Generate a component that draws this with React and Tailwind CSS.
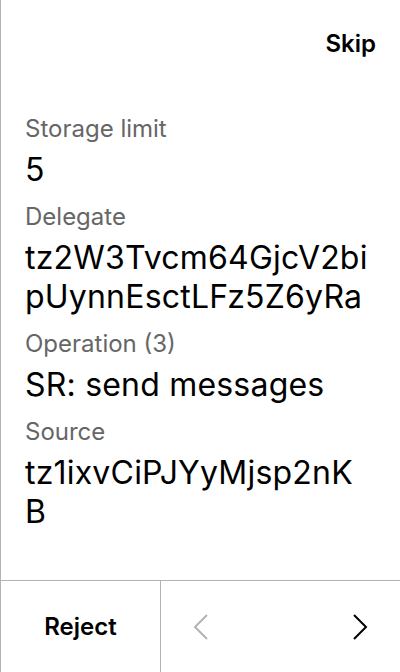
import React from "react";

// values are listed line by line, as the device wraps them
const fields = [
  { label: "Storage limit", lines: ["5"] },
  { label: "Delegate", lines: ["tz2W3Tvcm64GjcV2bi", "pUynnEsctLFz5Z6yRa"] },
  { label: "Operation (3)", lines: ["SR: send messages"] },
  { label: "Source", lines: ["tz1ixvCiPJYyMjsp2nK", "B"] },
];

const Chevron = ({ dir, className }) => (
  <svg
    width="16"
    height="26"
    viewBox="0 0 16 26"
    fill="none"
    stroke="currentColor"
    strokeWidth="2"
    className={className}
  >
    {dir === "left" ? (
      <polyline points="14,1 2,13 14,25" />
    ) : (
      <polyline points="2,1 14,13 2,25" />
    )}
  </svg>
);

const App = () => {
  return (
    <div className="w-[400px] h-[672px] flex flex-col bg-white border-l border-[#b3b3b3] font-['Inter',sans-serif] text-black">
      <div className="h-[88px] flex items-center justify-end px-6">
        <button type="button" className="text-[24px] font-semibold">
          Skip
        </button>
      </div>

      <div className="flex-1 flex flex-col gap-[12px] px-6 pt-[25px]">
        {fields.map((f) => (
          <div key={f.label} className="flex flex-col">
            <div className="text-[24px] leading-[32px] text-[#666666]">
              {f.label}
            </div>
            <div className="mt-[5px] text-[32px] leading-[39px] tracking-[0.2px]">
              {f.lines.map((line) => (
                <div key={line}>{line}</div>
              ))}
            </div>
          </div>
        ))}
      </div>

      <div className="h-[92px] flex border-t border-[#b3b3b3]">
        <button
          type="button"
          className="w-[160px] flex items-center justify-center text-[24px] font-semibold border-r border-[#b3b3b3]"
        >
          Reject
        </button>
        <div className="flex-1 flex items-center justify-between px-8">
          <Chevron dir="left" className="text-[#b3b3b3]" />
          <Chevron dir="right" className="text-black" />
        </div>
      </div>
    </div>
  );
};

export default App;
